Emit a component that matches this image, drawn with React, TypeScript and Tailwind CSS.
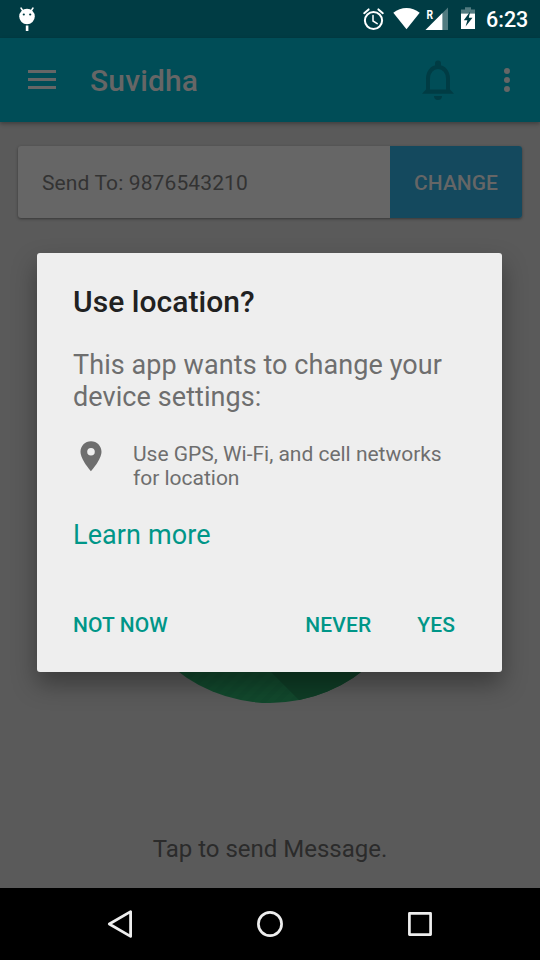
import React from "react";

function StatusBar() {
  return (
    <div className="flex h-[38px] shrink-0 items-start bg-[#003c44]">
      <svg className="ml-[18px] mt-[6px] shrink-0" width="18" height="26" viewBox="0 0 18 26">
        <path d="M3 2 L5 5 M15 2 L13 5" stroke="#fff" strokeWidth="1.5" strokeLinecap="round" />
        <circle cx="9" cy="10.5" r="7.8" fill="#fff" />
        <circle cx="5.8" cy="8.5" r="1.1" fill="#003c44" />
        <circle cx="12.2" cy="8.5" r="1.1" fill="#003c44" />
        <path d="M7.8 19.5h2.6v5.5h-2.6z" fill="#fff" />
      </svg>
      <svg className="ml-auto shrink-0" width="122" height="38" viewBox="358 0 122 38">
        <g fill="none" stroke="#fff" strokeLinecap="round">
          <circle cx="373.5" cy="20.5" r="8.6" strokeWidth="2" />
          <path d="M373 15.5v5.5l4.2 2.6" strokeWidth="1.5" />
          <path d="M364.2 13.2l4.4-3.8M382.8 13.2l-4.4-3.8" strokeWidth="2" />
        </g>
        <path d="M393.3 12.8 C401 6.3 412 6.3 419.7 12.8 L406.5 29.2 Z" fill="#fff" />
        <path d="M448 7.5v22.5h-22.5z" fill="#527b80" />
        <path d="M442.4 13.1v16.9h-16.9z" fill="#fff" />
        <text x="426.6" y="18.6" fill="#fff" fontSize="12.5" className="font-['Roboto',sans-serif] font-bold" textLength="6.6" lengthAdjust="spacingAndGlyphs">R</text>
        <path d="M461 13.5v-4h4v-2.3h6v2.3h4v4z" fill="#527b80" />
        <path d="M461 13.5h14v15.5h-14z" fill="#fff" />
        <path d="M470.2 11.5l-6.4 8.7h3.6l-1.8 6.4 6.9-8.8h-3.7z" fill="#003c44" />
      </svg>
      <span className="ml-[6px] mr-[12px] w-[42px] whitespace-nowrap pt-[8px] text-[21.5px] font-medium leading-[24px] text-white">6:23</span>
    </div>
  );
}

function Toolbar() {
  return (
    <header className="flex h-[84px] shrink-0 items-center bg-[#004d57] shadow-[0_2px_4px_rgba(0,0,0,0.3)]">
      <svg className="ml-[28px]" width="28" height="20" viewBox="0 0 28 20">
        <path d="M0 0h28v3H0zM0 8h28v3H0zM0 16h28v3H0z" fill="#666" />
      </svg>
      <h1 className="ml-[34px] pt-[2px] text-[30px] font-medium leading-[36px] tracking-[0.15px] text-[#666]">Suvidha</h1>
      <svg className="ml-auto mr-[50px]" width="32" height="40" viewBox="0 0 32 40">
        <path
          d="M6 31V18.5C6 12.3 9.8 7 16 7S26 12.3 26 18.5V31"
          fill="none"
          stroke="#003c44"
          strokeWidth="4"
        />
        <path d="M13 6.5V3.6a3 3 0 0 1 6 0v2.9zM4 29.5h24l4 4.2H0zM12 36h8a4 4 0 0 1-8 0z" fill="#003c44" />
      </svg>
      <svg className="mr-[30px]" width="6" height="24" viewBox="0 0 6 24">
        <g fill="#666">
          <circle cx="3" cy="3" r="3" />
          <circle cx="3" cy="12" r="3" />
          <circle cx="3" cy="21" r="3" />
        </g>
      </svg>
    </header>
  );
}

function RecipientCard() {
  return (
    <section className="mx-[18px] mt-[24px] flex h-[72px] shrink-0 overflow-hidden rounded-[3px] bg-[#666] shadow-[0_1px_3px_rgba(0,0,0,0.4)]">
      <p className="flex flex-1 items-center pl-[24px] pt-[3px] text-[21px] tracking-[0.12px] text-[#333]">Send To: 9876543210</p>
      <button className="w-[132px] bg-[#14495e] pt-[3px] text-[21px] font-medium text-[#666]">CHANGE</button>
    </section>
  );
}

function SendButton() {
  return (
    <svg className="mx-auto mt-[185px] shrink-0" width="300" height="300" viewBox="0 0 300 300">
      <defs>
        <pattern id="stripes" width="10" height="10" patternUnits="userSpaceOnUse" patternTransform="rotate(45)">
          <rect width="10" height="10" fill="#12492d" />
          <rect width="5" height="10" fill="#11472c" />
        </pattern>
        <clipPath id="disc">
          <circle cx="150" cy="150" r="150" />
        </clipPath>
      </defs>
      <g clipPath="url(#disc)">
        <rect width="300" height="300" fill="url(#stripes)" />
        <path d="M122 240L182 300H300V150z" fill="#0f3d26" />
      </g>
    </svg>
  );
}

function LocationDialog() {
  return (
    <div
      role="dialog"
      className="absolute left-[37px] top-[253px] flex h-[419px] w-[465px] flex-col rounded-[3px] bg-[#eee] px-[36px] text-[#6e6e6e] shadow-[0_12px_24px_rgba(0,0,0,0.35)]"
    >
      <h2 className="mt-[31px] text-[30px] font-medium leading-[36px] tracking-[0.04px] text-[#212121]">Use location?</h2>
      <p className="mt-[29px] whitespace-nowrap text-[27px] leading-[32px] tracking-[0.08px]">
        This app wants to change your
        <br />
        device settings:
      </p>
      <div className="mt-[29px] flex">
        <svg className="ml-[7px] mt-[-1px]" width="22" height="31" viewBox="0 0 22 31">
          <path
            fillRule="evenodd"
            d="M11 0.3C5.1 0.3 0.5 5 0.5 10.8C0.5 18.5 11 30.3 11 30.3S21.5 18.5 21.5 10.8C21.5 5 16.9 0.3 11 0.3zM11 7a3.8 3.8 0 1 1 0 7.6a3.8 3.8 0 0 1 0-7.6z"
            fill="#6e6e6e"
          />
        </svg>
        <p className="ml-[31px] whitespace-nowrap text-[21px] leading-[24px] tracking-[-0.02px]">
          Use GPS, Wi-Fi, and cell networks
          <br />
          for location
        </p>
      </div>
      <a className="mt-[29px] text-[27px] leading-[32px] tracking-[0.1px] text-[#009688]">Learn more</a>
      <div className="mt-[62px] flex text-[21px] font-medium leading-[24px] text-[#009688]">
        <button className="tracking-[0.1px]">NOT NOW</button>
        <button className="ml-auto tracking-[0.15px]">NEVER</button>
        <button className="ml-[46px] mr-[11px] tracking-[0.1px]">YES</button>
      </div>
    </div>
  );
}

function NavigationBar() {
  return (
    <nav className="flex h-[72px] shrink-0 items-center justify-between bg-black px-[105px]">
      <svg width="30" height="30" viewBox="0 0 30 30" fill="none" stroke="#eee" strokeWidth="2.8" strokeLinejoin="round">
        <path d="M4.3 15L25.6 2.6V27.4z" />
      </svg>
      <svg width="30" height="30" viewBox="0 0 30 30" fill="none" stroke="#eee" strokeWidth="2.7">
        <circle cx="15" cy="15" r="11.6" />
      </svg>
      <svg width="30" height="30" viewBox="0 0 30 30" fill="none" stroke="#eee" strokeWidth="2.7" strokeLinejoin="round">
        <path d="M4.4 4.4h21.2v21.2H4.4z" />
      </svg>
    </nav>
  );
}

export default function App() {
  return (
    <div className="relative flex h-[960px] w-[540px] flex-col overflow-hidden bg-[#5a5a5a] font-['Roboto',sans-serif]">
      <StatusBar />
      <Toolbar />
      <main className="flex flex-1 flex-col">
        <RecipientCard />
        <SendButton />
        <p className="mt-auto pb-[25px] text-center text-[24px] leading-[28px] text-[#2b2b2b]">Tap to send Message.</p>
      </main>
      <NavigationBar />
      <LocationDialog />
    </div>
  );
}
